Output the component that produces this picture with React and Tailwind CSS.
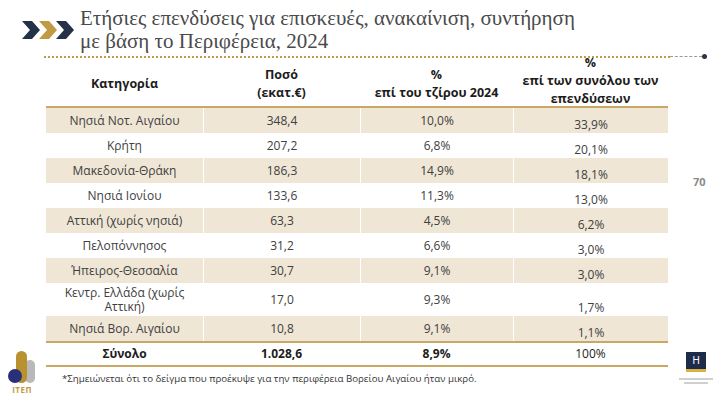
import React from 'react';

const rows = [
  ['Νησιά Νοτ. Αιγαίου', '348,4', '10,0%', '33,9%'],
  ['Κρήτη', '207,2', '6,8%', '20,1%'],
  ['Μακεδονία-Θράκη', '186,3', '14,9%', '18,1%'],
  ['Νησιά Ιονίου', '133,6', '11,3%', '13,0%'],
  ['Αττική (χωρίς νησιά)', '63,3', '4,5%', '6,2%'],
  ['Πελοπόννησος', '31,2', '6,6%', '3,0%'],
  ['Ήπειρος-Θεσσαλία', '30,7', '9,1%', '3,0%'],
  ['Κεντρ. Ελλάδα (χωρίς Αττική)', '17,0', '9,3%', '1,7%'],
  ['Νησιά Βορ. Αιγαίου', '10,8', '9,1%', '1,1%'],
];

const Chevrons = () => (
  <svg width="52" height="18" viewBox="0 0 52 18">
    <polygon points="0,0 10,0 18,9 10,18 0,18 8,9" fill="#243249" />
    <polygon points="17,0 27,0 35,9 27,18 17,18 25,9" fill="#c09a44" />
    <polygon points="34,0 44,0 52,9 44,18 34,18 42,9" fill="#243249" />
  </svg>
);

const ItepLogo = () => (
  <div className="flex flex-col items-center w-[32px]">
    <svg width="30" height="32" viewBox="0 0 30 32">
      <rect x="18" y="9" width="10" height="23" rx="5" fill="#b9b9b9" />
      <rect x="9" y="0" width="11" height="32" rx="5.5" fill="#b8922e" />
      <circle cx="8" cy="25" r="7" fill="#2a2f7a" />
    </svg>
    <span className="text-[8px] leading-[9px] font-bold text-[#c09a44] tracking-[0.5px] mt-[2px]">ΙΤΕΠ</span>
  </div>
);

const HotelLogo = () => (
  <div className="flex flex-col items-center w-[40px]">
    <div className="w-[20px] h-[17px] bg-[#1f2b4a] flex items-center justify-center text-white text-[10px] leading-none font-['Liberation_Sans']">H</div>
    <div className="w-[20px] h-[3px] bg-[#d7b440]" />
    <div className="mt-[6px] h-[2px] w-[34px] bg-[#cfcfcf]" />
    <div className="mt-[2px] h-[2px] w-[24px] bg-[#cfcfcf]" />
  </div>
);

export default function App() {
  return (
    <div className="relative w-[720px] h-[400px] bg-white overflow-hidden font-['Open_Sans',sans-serif] text-[#404040]">
      {/* title */}
      <div className="flex items-center pl-[22px] pt-[7px]">
        <Chevrons />
        <h1 className="ml-[6px] font-['Liberation_Serif',serif] text-[21px] leading-[23px] text-[#4a4a4a] font-normal">
          Ετήσιες επενδύσεις για επισκευές, ανακαίνιση, συντήρηση
          <br />
          με βάση το Περιφέρεια, 2024
        </h1>
      </div>
      <div className="flex items-center ml-[44px] mt-[1px]">
        <div className="w-[626px] border-t-2 border-dotted border-[#c09a55]" />
        <div className="w-[32px] border-t border-dashed border-[#9a9a9a]" />
        <div className="w-[5px] h-[5px] rounded-full bg-[#2b3446]" />
      </div>

      {/* table */}
      <div className="ml-[46px] mt-[1px] w-[622px] text-[12px]">
        <div className="grid grid-cols-[157px_157px_153px_155px] h-[48px] border-b-2 border-[#c9a865] font-bold text-[#1c1c1c] text-[12.5px] leading-[18px] text-center">
          <div className="flex items-center justify-center">Κατηγορία</div>
          <div className="flex flex-col items-center justify-center"><span>Ποσό</span><span>(εκατ.€)</span></div>
          <div className="flex flex-col items-center justify-center"><span>%</span><span>επί του τζίρου 2024</span></div>
          <div className="flex flex-col items-center justify-center -mt-[6px]"><span>%</span><span>επί των συνόλου των</span><span>επενδύσεων</span></div>
        </div>
        {rows.map((r, i) => (
          <div
            key={i}
            className={`grid grid-cols-[157px_157px_153px_155px] text-center leading-[14px] ${i % 2 === 0 ? 'bg-[#efe6d5]' : 'bg-white'} ${r[0].length > 22 ? 'h-[33px]' : 'h-[25px]'}`}
          >
            <div className="flex items-center justify-center px-[18px]">{r[0]}</div>
            <div className="flex items-center justify-center border-l border-white">{r[1]}</div>
            <div className="flex items-center justify-center border-l border-white">{r[2]}</div>
            <div className="flex items-end justify-center pb-[1px] border-l border-white">{r[3]}</div>
          </div>
        ))}
        <div className="grid grid-cols-[157px_157px_153px_155px] h-[26px] border-y-2 border-[#c9a865] text-center text-[#1c1c1c]">
          <div className="flex items-center justify-center font-bold">Σύνολο</div>
          <div className="flex items-center justify-center font-bold">1.028,6</div>
          <div className="flex items-center justify-center font-bold">8,9%</div>
          <div className="flex items-center justify-center">100%</div>
        </div>
      </div>

      <p className="ml-[62px] mt-[5px] text-[9.7px] leading-[14px] text-[#333]">
        *Σημειώνεται ότι το δείγμα που προέκυψε για την περιφέρεια Βορείου Αιγαίου ήταν μικρό.
      </p>

      <span className="absolute left-[693px] top-[174px] text-[11px] font-bold text-[#8a8a8a]">70</span>
      <div className="absolute left-[6px] top-[351px]"><ItepLogo /></div>
      <div className="absolute left-[676px] top-[352px]"><HotelLogo /></div>
    </div>
  );
}
